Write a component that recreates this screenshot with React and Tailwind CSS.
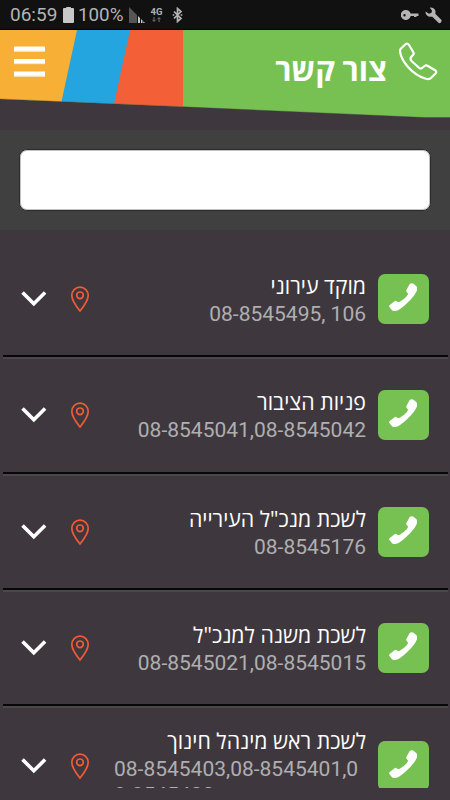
import React from 'react';

const contacts = [
  { name: 'מוקד עירוני', lines: ['08-8545495, 106'] },
  { name: 'פניות הציבור', lines: ['08-8545041,08-8545042'] },
  { name: 'לשכת מנכ"ל העירייה', lines: ['08-8545176'] },
  { name: 'לשכת משנה למנכ"ל', lines: ['08-8545021,08-8545015'] },
  { name: 'לשכת ראש מינהל חינוך', lines: ['08-8545403,08-8545401,0', '8-8545400'], tall: true },
];

function StatusBar() {
  return (
    <div className="flex h-[30px] items-center bg-[#111111] pl-[10px] pr-[8px] text-[#b4b4b4] shadow-[inset_0_-1px_0_#000]">
      <span className="w-[47px] whitespace-nowrap text-[19px] leading-[30px]">06:59</span>
      <svg className="ml-[6px] h-[16px] w-[11px]" viewBox="0 0 11 16">
        <path d="M3.2 0h4.6v1H10a1 1 0 0 1 1 1V15a1 1 0 0 1-1 1H1a1 1 0 0 1-1-1V2a1 1 0 0 1 1-1h2.200z" fill="#c8c8c8" />
      </svg>
      <span className="ml-[4px] w-[46px] whitespace-nowrap text-[18.8px] leading-[30px]">100%</span>
      <svg className="ml-[5px] h-[16px] w-[16px]" viewBox="0 0 16 16">
        <path d="M0 0L8 8V16H0z" fill="#555" />
        <path d="M9 9l2 2v5H9zM12 12l1.500 1.500V16H12zM14.300 14.300L16 16h-1.700z" fill="#c8c8c8" />
      </svg>
      <div className="ml-[5px] flex h-[16px] w-[13px] flex-col items-center">
        <span className="text-[9.5px] font-bold leading-[9px]">4G</span>
        <svg className="mt-[1px] h-[5px] w-[9px]" viewBox="0 0 9 5">
          <path d="M2 0v4M.5 2.800L2 4.500l1.500-1.700M7 5V1M5.500 2.200L7 .5l1.500 1.700" fill="none" stroke="#777" />
        </svg>
      </div>
      <svg className="ml-[9px] h-[16px] w-[12px]" viewBox="0 0 12 16">
        <path d="M2 4.500l7 7L5.500 14.500V1.500L9 4.500l-7 7" fill="none" stroke="#b4b4b4" strokeWidth="1.700" />
        <circle cx="1.500" cy="8" r="1" fill="#999" />
        <circle cx="9.500" cy="8" r="1" fill="#999" />
      </svg>
      <svg className="ml-auto h-[10px] w-[18px]" viewBox="0 0 18 10">
        <path fillRule="evenodd" d="M5 0a5 5 0 0 1 4.600 3.500H17.500V6H15.500V7H13V6H9.700A5 5 0 1 1 5 0zM3.500 4a1.200 1.200 0 1 0 0 2.400 1.200 1.200 0 0 0 0-2.400z" fill="#b4b4b4" />
      </svg>
      <svg className="ml-[6px] h-[17px] w-[17px]" viewBox="0 0 17 17">
        <path d="M5.500 .5Q9 .5 10.300 3.500Q10.800 5 10.300 6.700L16.500 13Q17 14 16 15.200Q14.800 16.700 13.500 15.800L7.300 9.700Q3.800 10.400 1.500 8Q.2 6.300 .6 4.400L4 6.800L6.500 5.800L7 3.500L4.800 .8z" fill="#b4b4b4" />
      </svg>
    </div>
  );
}

function Header() {
  return (
    <header className="relative h-[100px]">
      <svg className="absolute left-0 top-0 h-[88px] w-[450px]" viewBox="0 0 450 88">
        <path d="M0 0H450V87.500H425L183 76.800L0 69z" fill="#77c153" />
        <path d="M129 0H183V76.800L113 73.800z" fill="#f35f36" />
        <path d="M76 0H130L114 73.850L61 71.600z" fill="#24a5e0" />
        <path d="M0 0H77L61.500 71.600L0 69z" fill="#f7af35" />
        <path d="M0 69L183 76.800L425 87.500H450" fill="none" stroke="#3e383e" strokeOpacity=".35" />
      </svg>
      <div className="relative flex items-start pl-[14px] pr-[12px]">
        <svg className="mt-[16px] h-[32px] w-[31px]" viewBox="0 0 31 32">
          <path d="M0 .4h31v5H0zM0 12.900h31v5H0zM0 25.400h31v5H0z" fill="#fff" />
          <path d="M0 5.200h31M0 17.700h31M0 30.200h31" stroke="#fae3b8" />
        </svg>
        <h1 dir="rtl" className="ml-auto mt-[19px] whitespace-nowrap font-['Open_Sans','DejaVu_Sans',sans-serif] text-[30.5px] font-bold leading-[40px] text-white">
          צור קשר
        </h1>
        <svg className="ml-[12px] mt-[12px] h-[39px] w-[39px]" viewBox="0 0 39 39">
          <path d="M2 6.500L6.500 2.200Q8.500 .8 10 3L14.500 10.500Q15.300 12 13.500 13.500L11.800 15.500Q11 17 12.500 19L20 25.800Q21.500 27 23 26L25.500 24Q27 22.800 28.500 23.700L36.500 28.500Q38 29.800 36.500 31.500L32.500 35.500Q30.500 37.800 27 36.800Q17 34 9 25Q2 17 1 9.500Q.9 7.600 2 6.500z" fill="none" stroke="#fff" strokeWidth="2.200" strokeLinejoin="round" />
        </svg>
      </div>
    </header>
  );
}

function ContactRow({ name, lines, tall }) {
  return (
    <li className="flex h-[116.250px] shrink-0 flex-col">
      <div className={`flex flex-1 items-start pl-[21px] pr-[21px] ${tall ? 'pt-[33px]' : 'pt-[31px]'}`}>
        <svg className="mt-[17px] h-[16px] w-[26px]" viewBox="0 0 26 16">
          <path d="M2.800 2.800L12.800 12.800L22.800 2.800" fill="none" stroke="#fff" strokeWidth="3.600" strokeLinecap="square" />
        </svg>
        <svg className="ml-[23px] mt-[12px] h-[27px] w-[20px]" viewBox="0 0 20 27">
          <path d="M10 1.200A8.200 8.200 0 0 0 1.800 9.400C1.800 14.500 5.500 19.300 10 25C14.500 19.300 18.200 14.500 18.200 9.400A8.200 8.200 0 0 0 10 1.200z" fill="none" stroke="#f05c35" strokeWidth="1.700" />
          <circle cx="10" cy="9.300" r="3.300" fill="none" stroke="#f05c35" strokeWidth="1.700" />
        </svg>
        <div className={`ml-auto flex flex-col ${tall ? '-mt-[14px] w-[252px]' : '-mt-[2px]'}`}>
          <span dir="rtl" className={`whitespace-nowrap font-['Open_Sans','DejaVu_Sans',sans-serif] text-[21.3px] leading-[28px] text-white ${tall ? 'mb-px' : ''}`}>
            {name}
          </span>
          {lines.map((line) => (
            <span key={line} className={`whitespace-nowrap text-[21px] text-[#b0afb0] ${tall ? 'text-left leading-[26px]' : 'text-right leading-[28px]'}`}>
              {line}
            </span>
          ))}
        </div>
        <button className="ml-[12px] flex h-[50px] w-[51px] shrink-0 items-start rounded-[7px] bg-[#77c153]">
          <svg className="ml-[11px] mt-[9px] h-[28px] w-[28px]" viewBox="0 0 28 28">
            <path d="M20.500 1.300Q22 -.3 24 .5L27.300 3Q28.300 4 28 7.300Q27.300 9.500 24.900 12.700Q21.700 16.800 18.200 20Q14.700 23.700 10.700 26.200Q8.500 27.700 6 28Q4 28.200 2.800 27L.2 23.800Q-.2 22.700 .8 22L5.800 18Q6.800 17.500 8 18.500Q9.300 19.500 10.700 18.800Q14.700 16.700 17.700 13.200Q19.200 11.500 19 10.600Q16.900 8.700 17.300 7.300z" fill="#fff" />
          </svg>
        </button>
      </div>
      <div className="mx-[2.500px] h-[4px] shrink-0 border-t-2 border-[#080808] bg-[#4a494a]" />
    </li>
  );
}

export default function App() {
  return (
    <main className="flex h-[800px] w-[450px] flex-col overflow-hidden bg-[#3e383e] font-[Roboto,sans-serif]">
      <StatusBar />
      <Header />
      <section className="h-[100px] shrink-0 bg-[#3f403f] px-[19px] pt-[19px]">
        <input className="block h-[62px] w-full rounded-[8px] border border-[#292a2c] bg-white px-3 shadow-[inset_0_0_0_1px_#c4c4bd] outline-none" />
      </section>
      <ul className="flex h-[558px] shrink-0 flex-col overflow-hidden pt-[13px]">
        {contacts.map((contact) => (
          <ContactRow key={contact.name} {...contact} />
        ))}
      </ul>
    </main>
  );
}
